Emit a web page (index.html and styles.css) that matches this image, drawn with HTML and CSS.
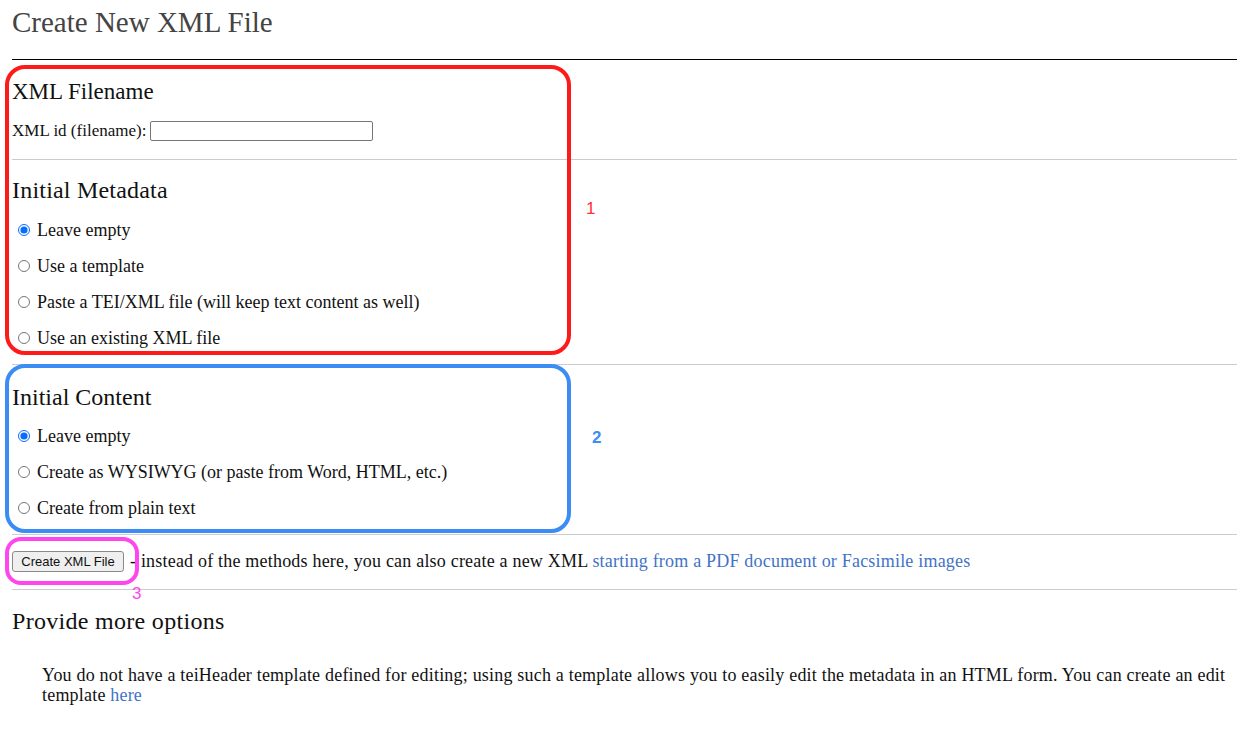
FILE: index.html
```html
<!DOCTYPE html>
<html>
<head>
<meta charset="utf-8">
<title>Create New XML File</title>
<link rel="stylesheet" href="styles.css">
</head>
<body>
<div class="page">
  <h1 class="title">Create New XML File</h1>

  <section class="sec sec-file">
    <h2 class="h2">XML Filename</h2>
    <div class="field-row">
      <label for="xmlid">XML id (filename):</label>
      <input id="xmlid" class="text-input" type="text">
    </div>
  </section>

  <section class="sec sec-meta">
    <h2 class="h2">Initial Metadata</h2>
    <label class="radio-row"><input type="radio" name="meta" checked><span>Leave empty</span></label>
    <label class="radio-row"><input type="radio" name="meta"><span>Use a template</span></label>
    <label class="radio-row"><input type="radio" name="meta"><span>Paste a TEI/XML file (will keep text content as well)</span></label>
    <label class="radio-row"><input type="radio" name="meta"><span>Use an existing XML file</span></label>
  </section>

  <section class="sec sec-content">
    <h2 class="h2">Initial Content</h2>
    <label class="radio-row"><input type="radio" name="content" checked><span>Leave empty</span></label>
    <label class="radio-row"><input type="radio" name="content"><span>Create as WYSIWYG (or paste from Word, HTML, etc.)</span></label>
    <label class="radio-row"><input type="radio" name="content"><span>Create from plain text</span></label>
  </section>

  <section class="sec sec-submit">
    <div class="submit-row">
      <button class="btn" type="button">Create XML File</button>
      <span class="after-btn">- instead of the methods here, you can also create a new XML <a href="#" class="link">starting from a PDF document or Facsimile images</a></span>
    </div>
  </section>

  <section class="sec sec-more">
    <h2 class="h2 h2-more">Provide more options</h2>
    <p class="note">You do not have a teiHeader template defined for editing; using such a template allows you to easily edit the metadata in an HTML form. You can create an edit template <a href="#" class="link">here</a></p>
  </section>

  <div class="anno anno-red"></div>
  <div class="anno-num num-red">1</div>
  <div class="anno anno-blue"></div>
  <div class="anno-num num-blue">2</div>
  <div class="anno anno-pink"></div>
  <div class="anno-num num-pink">3</div>
</div>
</body>
</html>
```
FILE: styles.css
```css
html, body {
  margin: 0;
  padding: 0;
  background: #fff;
}
body {
  font-family: "Liberation Serif", "DejaVu Serif", serif;
  font-size: 18px;
  color: #111;
}
.page {
  position: relative;
  margin: 0 13px 0 12px;
  padding-top: 7px;
  height: 722px;
}
.title {
  margin: 0;
  padding-bottom: 22px;
  height: 30px;
  line-height: 30px;
  font-size: 29px;
  font-weight: normal;
  color: #444;
  border-bottom: 1px solid #000;
}
.sec {
  border-bottom: 1px solid #ccc;
}
.sec-more {
  border-bottom: none;
}
.h2 {
  margin: 0;
  height: 26px;
  line-height: 26px;
  font-size: 24px;
  font-weight: normal;
  color: #111;
}
.h2-more {
  letter-spacing: 0.3px;
}
.sec-file {
  padding: 19px 0 16px;
}
.sec-file .h2 {
  font-size: 23px;
}
.field-row {
  margin-top: 14px;
  height: 24px;
  display: flex;
  align-items: center;
  gap: 4px;
  font-size: 17px;
}
.text-input {
  width: 221px;
  height: 18px;
  margin: 0;
  padding: 0;
  border: 1px solid #767676;
  border-radius: 2px;
  box-sizing: content-box;
}
.sec-meta {
  padding: 17px 0 8px;
}
.sec-meta .h2 {
  margin-bottom: 9px;
  letter-spacing: 0.2px;
}
.sec-content {
  padding: 19px 0 8px;
}
.sec-content .h2 {
  margin-bottom: 8px;
}
.radio-row {
  display: flex;
  align-items: center;
  height: 36px;
}
.radio-row input {
  margin: 0 0 0 6px;
  width: 12px;
  height: 12px;
  accent-color: #0a6cff;
}
.radio-row span {
  margin-left: 7px;
}
.sec-submit {
  padding: 14px 0 16px;
}
.submit-row {
  display: flex;
  align-items: center;
  height: 24px;
  white-space: nowrap;
}
.after-btn {
  letter-spacing: 0.2px;
}
.btn {
  font-family: "Liberation Sans", Arial, sans-serif;
  font-size: 13px;
  color: #111;
  background: #efefef;
  border: 1px solid #8a8a8a;
  border-radius: 3px;
  padding: 0 7px;
  width: 112px;
  height: 21px;
  margin: 0 6px 0 0;
}
.link {
  color: #3f73c7;
  text-decoration: none;
}
.sec-more {
  padding-top: 18px;
}
.note {
  margin: 31px 0 0;
  padding-left: 30px;
  line-height: 20px;
  letter-spacing: 0.2px;
}

/* annotation overlays */
.anno {
  position: absolute;
  box-sizing: border-box;
  border-width: 4px;
  border-style: solid;
  pointer-events: none;
}
.anno-red {
  left: -7px;
  top: 65px;
  width: 566px;
  height: 290px;
  border-color: #ff1a1a;
  border-radius: 20px;
}
.anno-blue {
  left: -7px;
  top: 364px;
  width: 566px;
  height: 169px;
  border-color: #3b8cf5;
  border-radius: 20px;
}
.anno-pink {
  left: -7px;
  top: 537px;
  width: 134px;
  height: 48px;
  border-color: #ff45ee;
  border-radius: 16px;
}
.anno-num {
  position: absolute;
  font-family: "Liberation Sans", Arial, sans-serif;
  font-size: 17px;
  line-height: 20px;
}
.num-red {
  left: 574px;
  top: 199px;
  color: #ff3030;
}
.num-blue {
  left: 580px;
  top: 428px;
  color: #3b8cf5;
  font-weight: bold;
}
.num-pink {
  left: 120px;
  top: 584px;
  color: #ff45ee;
}
```
